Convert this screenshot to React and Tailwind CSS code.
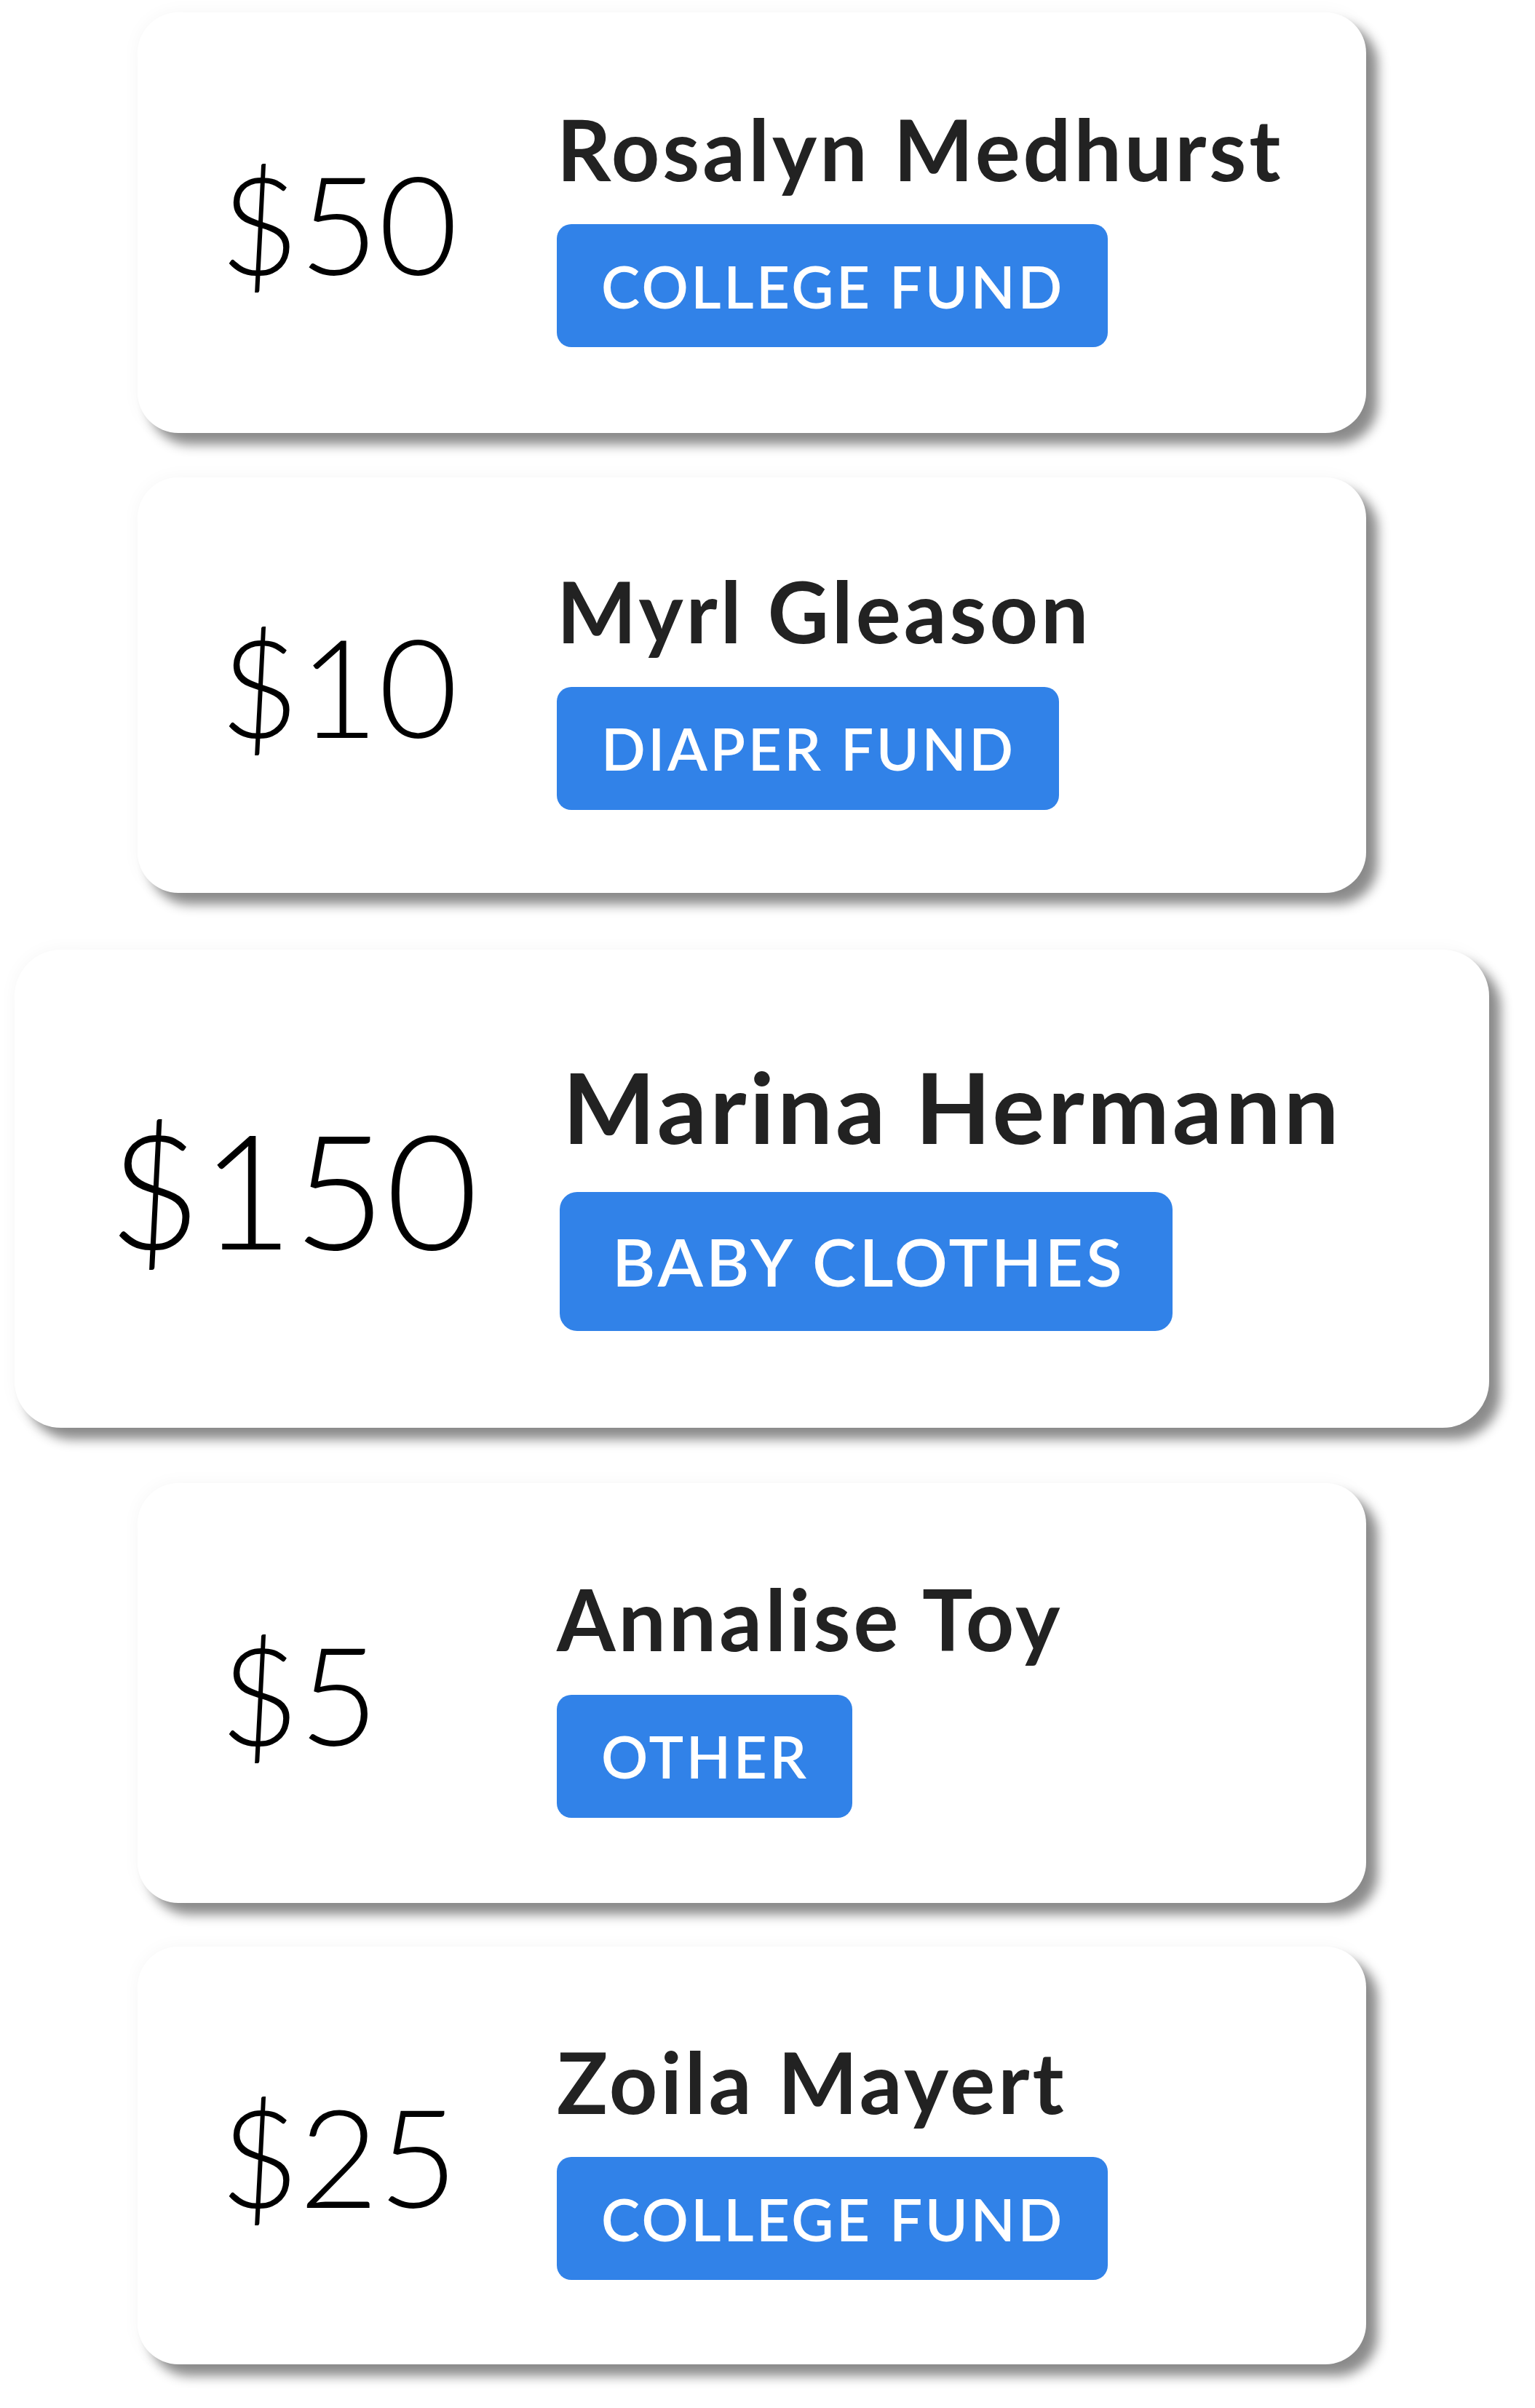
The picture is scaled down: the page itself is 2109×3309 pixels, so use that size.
const gifts = [
  {
    amount: "$50",
    name: "Rosalyn Medhurst",
    fund: "COLLEGE FUND",
    wrap: "mt-[17px]",
    size: "w-[1688px] h-[578px] rounded-[56px]",
  },
  {
    amount: "$10",
    name: "Myrl Gleason",
    fund: "DIAPER FUND",
    wrap: "mt-[61px]",
    size: "w-[1688px] h-[571px] rounded-[56px]",
  },
  {
    amount: "$150",
    name: "Marina Hermann",
    fund: "BABY CLOTHES",
    wrap: "mt-[78px]",
    size: "w-[2026px] h-[657px] rounded-[64px]",
    big: true,
  },
  {
    amount: "$5",
    name: "Annalise Toy",
    fund: "OTHER",
    wrap: "mt-[76px]",
    size: "w-[1688px] h-[577px] rounded-[56px]",
  },
  {
    amount: "$25",
    name: "Zoila Mayert",
    fund: "COLLEGE FUND",
    wrap: "mt-[60px]",
    size: "w-[1688px] h-[574px] rounded-[56px]",
  },
];

function GiftCard({ gift }) {
  const big = gift.big;
  return (
    <div
      className={`${gift.wrap} ${gift.size} shrink-0 flex items-center bg-white shadow-[16px_16px_16px_rgba(0,0,0,0.45),0_0_24px_rgba(0,0,0,0.04)]`}
    >
      <div className={big ? "w-[749px] pl-[129px] shrink-0" : "w-[576px] pl-[113px] shrink-0"}>
        <span
          className={
            big
              ? "text-[219px] font-light leading-[1.2] text-black"
              : "text-[188px] font-light leading-[1.2] text-black"
          }
        >
          {gift.amount}
        </span>
      </div>
      <div className="flex flex-col items-start">
        <div
          className={
            big
              ? "ml-[4px] text-[135px] font-bold leading-[1.2] tracking-[4px] text-[#222222] whitespace-nowrap"
              : "text-[116px] font-bold leading-[1.2] tracking-[4px] text-[#222222] whitespace-nowrap"
          }
        >
          {gift.name}
        </div>
        <div
          className={
            big
              ? "mt-[37px] h-[191px] pl-[72px] pr-[65px] rounded-[24px] bg-[#3182e8] flex items-center text-white text-[91px] font-semibold tracking-[4px] whitespace-nowrap"
              : "mt-[34px] h-[169px] pl-[61px] pr-[59px] rounded-[20px] bg-[#3182e8] flex items-center text-white text-[80px] font-semibold tracking-[3.5px] whitespace-nowrap"
          }
        >
          {gift.fund}
        </div>
      </div>
    </div>
  );
}

export default function App() {
  return (
    <div className="min-h-screen bg-white font-['Lato',sans-serif]">
      <div className="w-[2066px] flex flex-col items-center pb-[40px]">
        {gifts.map((g) => (
          <GiftCard key={g.name} gift={g} />
        ))}
      </div>
    </div>
  );
}
